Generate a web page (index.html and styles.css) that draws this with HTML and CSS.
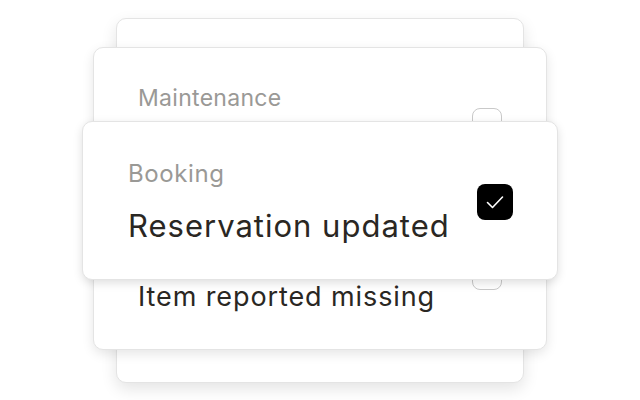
FILE: index.html
```
<!DOCTYPE html>
<html>
<head>
<meta charset="utf-8">
<link rel="stylesheet" href="styles.css">
</head>
<body>
<div class="stage">
  <div class="card card-back"></div>
  <div class="card card-mid">
    <div class="row">
      <div class="text">
        <div class="label">Maintenance</div>
        <div class="title title-empty"></div>
      </div>
      <span class="box"></span>
    </div>
    <div class="row">
      <div class="text">
        <div class="label label-empty"></div>
        <div class="title">Item reported missing</div>
      </div>
      <span class="box"></span>
    </div>
  </div>
  <div class="card card-front">
    <div class="row">
      <div class="text">
        <div class="label">Booking</div>
        <div class="title">Reservation updated</div>
      </div>
      <span class="box checked">
        <svg viewBox="0 0 36 36" width="36" height="36"><path d="M10.5 18.5 L15.5 23.5 L25.5 13" fill="none" stroke="#fff" stroke-width="1.6" stroke-linecap="round" stroke-linejoin="round"/></svg>
      </span>
    </div>
  </div>
</div>
</body>
</html>
```
FILE: styles.css
```
html, body {
  margin: 0;
  padding: 0;
  background: #ffffff;
}
body {
  font-family: Inter, "Liberation Sans", sans-serif;
}
.stage {
  width: 640px;
  height: 400px;
  display: grid;
  overflow: hidden;
}
.card {
  grid-area: 1 / 1;
  justify-self: center;
  align-self: start;
  box-sizing: border-box;
  background: #fff;
  border: 1px solid #e4e4e4;
  border-radius: 10px;
}
.card-back {
  width: 408px;
  height: 365px;
  margin-top: 18px;
  box-shadow: 0 6px 16px rgba(0, 0, 0, 0.11);
}
.card-mid {
  width: 454px;
  height: 303px;
  margin-top: 47px;
  padding: 36px 44px 0 44px;
  display: flex;
  flex-direction: column;
  gap: 75px;
  box-shadow: 0 4px 12px rgba(0, 0, 0, 0.10);
}
.card-front {
  width: 476px;
  height: 159px;
  margin-top: 121px;
  padding: 37px 44px 0 45px;
  box-shadow: 0 3px 10px rgba(0, 0, 0, 0.13);
}
.row {
  display: flex;
  align-items: center;
  justify-content: space-between;
}
.text {
  display: flex;
  flex-direction: column;
}
.label {
  color: #9a9996;
  font-size: 23px;
  line-height: 28px;
  height: 28px;
  letter-spacing: 0.3px;
  margin-bottom: 16px;
  white-space: nowrap;
}
.title {
  color: #2a2723;
  font-size: 27px;
  line-height: 33px;
  height: 33px;
  letter-spacing: 0.9px;
  white-space: nowrap;
}
.card-front .label {
  font-size: 24px;
  line-height: 29px;
  height: 29px;
  letter-spacing: 0.6px;
  margin-bottom: 19px;
}
.card-front .title {
  font-size: 31px;
  line-height: 37px;
  height: 37px;
  letter-spacing: 1px;
}
.box {
  width: 30px;
  height: 30px;
  box-sizing: border-box;
  border: 1.5px solid #c9c9c9;
  border-radius: 8px;
  flex: none;
}
.box.checked {
  width: 36px;
  height: 36px;
  border: none;
  background: #000;
  border-radius: 8px;
  display: flex;
}
```
